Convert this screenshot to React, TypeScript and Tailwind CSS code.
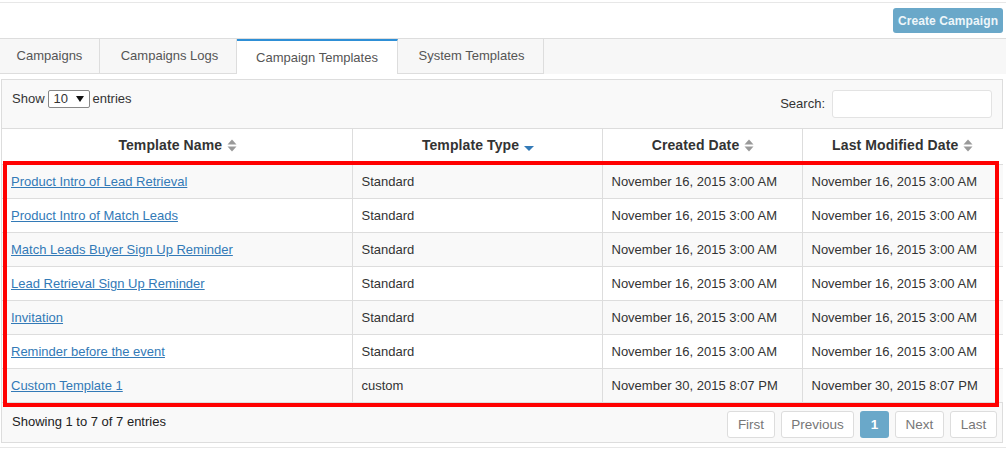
const rows = [
  { name: 'Product Intro of Lead Retrieval', type: 'Standard', date: 'November 16, 2015 3:00 AM' },
  { name: 'Product Intro of Match Leads', type: 'Standard', date: 'November 16, 2015 3:00 AM' },
  { name: 'Match Leads Buyer Sign Up Reminder', type: 'Standard', date: 'November 16, 2015 3:00 AM' },
  { name: 'Lead Retrieval Sign Up Reminder', type: 'Standard', date: 'November 16, 2015 3:00 AM' },
  { name: 'Invitation', type: 'Standard', date: 'November 16, 2015 3:00 AM' },
  { name: 'Reminder before the event', type: 'Standard', date: 'November 16, 2015 3:00 AM' },
  { name: 'Custom Template 1', type: 'custom', date: 'November 30, 2015 8:07 PM' },
];

const tabs = [
  { label: 'Campaigns', width: 'w-[100px]' },
  { label: 'Campaigns Logs', width: 'w-[137px]', shift: 'pl-[3px]' },
  { label: 'Campaign Templates', width: 'w-[161px]', active: true },
  { label: 'System Templates', width: 'w-[146px]', shift: 'pl-[2px]' },
];

function SortIcon() {
  return (
    <svg width="10" height="13" viewBox="0 0 10 13" className="ml-[5px] inline-block" fill="#999">
      <path d="M5 0.5 9.5 5.5H0.5Z" />
      <path d="M0.5 7.5H9.5L5 12.5Z" />
    </svg>
  );
}

function SortDesc() {
  return (
    <svg width="10" height="5" viewBox="0 0 10 5" className="ml-[5px] mt-[6px] inline-block" fill="#337ab7">
      <path d="M0 0H10L5 5Z" />
    </svg>
  );
}

function PageButton({ label, width }: { label: string; width: string }) {
  return (
    <span className={`flex h-[27px] ${width} items-center justify-center rounded-[3px] border border-[#ddd] bg-white pt-[1px] text-[#777]`}>
      {label}
    </span>
  );
}

export default function App() {
  return (
    <div className="h-[449px] w-[1006px] overflow-hidden bg-white font-['Liberation_Sans',Arial,sans-serif] text-[13px] text-[#333]">
      <div className="mt-[2px] h-px bg-[#e7e7e7]" />

      <div className="flex h-[35px] justify-end pr-[3px] pt-[5px]">
        <button className="h-[25px] w-[110px] whitespace-nowrap rounded-[3px] bg-[#6aa8c9] text-[12px] font-bold tracking-[0.1px] text-[#eef6fa]">
          Create Campaign
        </button>
      </div>

      <div className="flex h-[36px] border-t border-[#ddd] bg-[#f7f7f7]">
        {tabs.map(t => (
          <div
            key={t.label}
            className={`flex items-center justify-center border-r border-[#ddd] ${t.width} ${t.shift ?? ''} ${
              t.active ? 'border-t-[2px] border-t-[#2e8fd6] bg-white' : 'border-b border-b-[#ddd]'
            }`}
          >
            <span className="text-[#555]">{t.label}</span>
          </div>
        ))}
      </div>

      <div className="ml-px mt-[5px] h-[364px] w-[1002px] border border-[#ddd] bg-[#f9f9f9]">
        <div className="flex h-[48px] justify-between px-[10px] pt-[10px]">
          <div className="flex h-[18px] items-center text-[13px]">
            <span>Show</span>
            <span className="mx-[3px] flex h-[18px] w-[42px] items-center justify-between rounded-[2px] border border-[#888] bg-white px-[5px]">
              10
              <svg width="8" height="6" viewBox="0 0 8 6" fill="#111">
                <path d="M0 0H8L4 6Z" />
              </svg>
            </span>
            <span>entries</span>
          </div>
          <div className="flex items-start gap-[7px] text-[13px]">
            <span className="mt-[4px]">Search:</span>
            <span className="h-[28px] w-[160px] rounded-[3px] border border-[#e3e3e3] bg-white" />
          </div>
        </div>

        <div className="relative">
          <table className="w-[1001px] table-fixed border-collapse">
            <thead>
              <tr className="h-[36px] bg-white text-[14px] font-bold tracking-[0.1px]">
                <th className="w-[350px] border-y border-r border-[#ddd] pb-[2px] pl-[2px]">
                  <span className="flex items-center justify-center">Template Name<SortIcon /></span>
                </th>
                <th className="w-[250px] border-y border-r border-[#ddd] pb-[2px] pl-[2px]">
                  <span className="flex items-center justify-center">Template Type<SortDesc /></span>
                </th>
                <th className="w-[200px] border-y border-r border-[#ddd] pb-[2px] pl-[2px]">
                  <span className="flex items-center justify-center">Created Date<SortIcon /></span>
                </th>
                <th className="border-y border-[#ddd] pb-[2px]">
                  <span className="flex items-center justify-center">Last Modified Date<SortIcon /></span>
                </th>
              </tr>
            </thead>
            <tbody>
              {rows.map((r, i) => (
                <tr key={r.name} className={`h-[34px] ${i % 2 === 0 ? 'bg-[#f9f9f9]' : 'bg-white'}`}>
                  <td className="border-y border-r border-[#ddd] px-[9px]">
                    <a className="text-[#337ab7] underline">{r.name}</a>
                  </td>
                  <td className="border-y border-r border-[#ddd] px-[9px]">{r.type}</td>
                  <td className="border-y border-r border-[#ddd] px-[9px]">{r.date}</td>
                  <td className="border-y border-[#ddd] px-[9px]">{r.date}</td>
                </tr>
              ))}
            </tbody>
          </table>
          {/* highlight drawn over the rows */}
          <div className="pointer-events-none absolute left-px top-[33px] h-[246px] w-[996px] border-[4px] border-[#f00]" />
        </div>

        <div className="flex justify-between pl-[10px] pr-[5px] pt-[8px]">
          <span className="mt-[1px] text-[13px] text-[#222]">Showing 1 to 7 of 7 entries</span>
          <div className="flex gap-[6px] text-[13.5px]">
            <PageButton label="First" width="w-[48px]" />
            <PageButton label="Previous" width="w-[73px]" />
            <span className="flex h-[27px] w-[29px] items-center justify-center rounded-[3px] bg-[#6aa8c9] pt-[1px] font-bold text-white">1</span>
            <PageButton label="Next" width="w-[49px]" />
            <PageButton label="Last" width="w-[47px]" />
          </div>
        </div>
      </div>

      <div className="mt-[4px] h-px bg-[#e7e7e7]" />
    </div>
  );
}
